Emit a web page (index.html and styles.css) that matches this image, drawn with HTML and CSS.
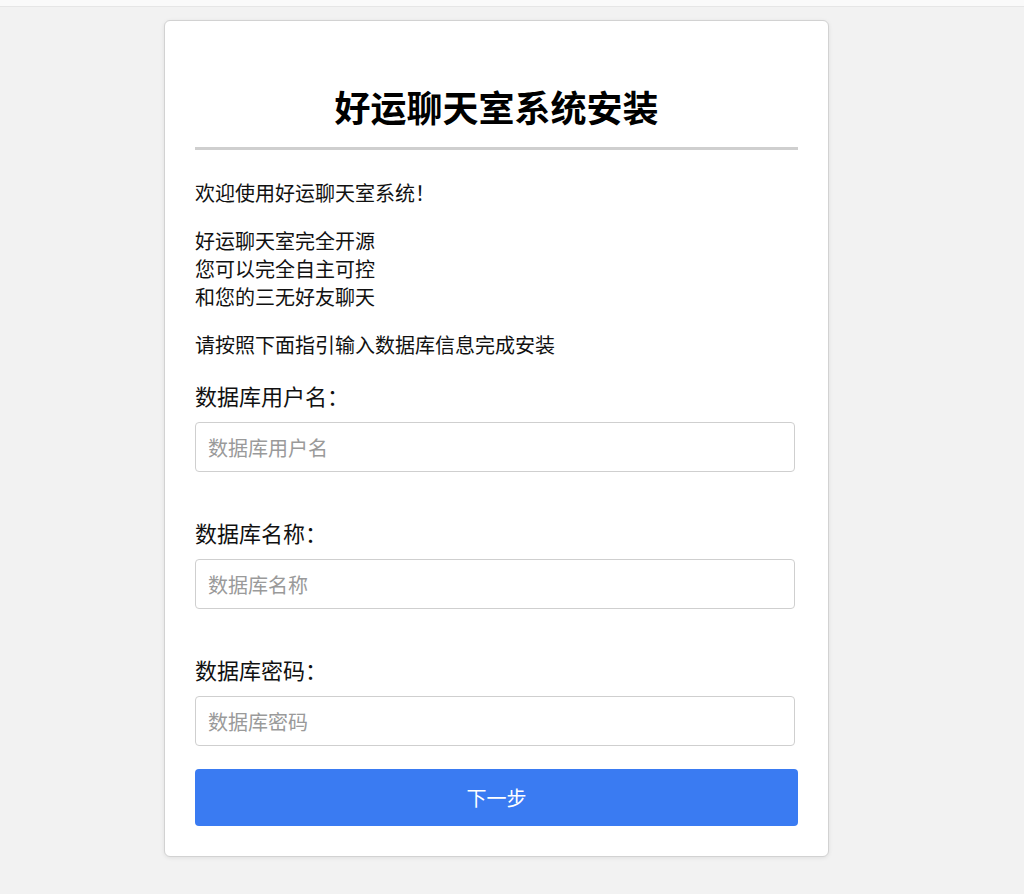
FILE: index.html
```html
<!DOCTYPE html>
<html lang="zh-CN">
<head>
    <meta charset="UTF-8">
    <meta name="viewport" content="width=device-width, initial-scale=1.0">
    <title>好运聊天室系统安装</title>
    <link rel="stylesheet" href="styles.css">
</head>
<body>
    <div class="topbar"></div>

    <div class="card">
        <h1>好运聊天室系统安装</h1>

        <div class="intro">
            <p>欢迎使用好运聊天室系统！</p>
            <p>好运聊天室完全开源<br>您可以完全自主可控<br>和您的三无好友聊天</p>
            <p>请按照下面指引输入数据库信息完成安装</p>
        </div>

        <form class="install-form" onsubmit="return false;">
            <div class="field">
                <label for="dbUser">数据库用户名：</label>
                <input type="text" id="dbUser" placeholder="数据库用户名">
            </div>
            <div class="field">
                <label for="dbName">数据库名称：</label>
                <input type="text" id="dbName" placeholder="数据库名称">
            </div>
            <div class="field">
                <label for="dbPass">数据库密码：</label>
                <input type="password" id="dbPass" placeholder="数据库密码">
            </div>
            <button type="submit" class="btn">下一步</button>
        </form>
    </div>
</body>
</html>
```

FILE: styles.css
```css
* {
    margin: 0;
    padding: 0;
    box-sizing: border-box;
}

body {
    font-family: "Noto Sans CJK SC", "Noto Sans", sans-serif;
    background: #f2f2f2;
    color: #111;
    min-height: 100vh;
}

.topbar {
    height: 7px;
    background: #fafafa;
    border-bottom: 1px solid #e6e6e6;
}

.card {
    width: 665px;
    margin: 13px 0 37px 164px;
    padding: 30px;
    background: #fff;
    border: 1px solid #d2d2d2;
    border-radius: 6px;
    box-shadow: 0 1px 4px rgba(0, 0, 0, 0.08);
}

.card h1 {
    margin-top: 29px;
    padding-bottom: 15px;
    border-bottom: 3px solid #cfcfcf;
    font-size: 36px;
    line-height: 52px;
    font-weight: 700;
    text-align: center;
    color: #000;
}

.intro {
    margin-top: 29px;
}

.intro p {
    font-size: 20px;
    line-height: 28px;
    margin-bottom: 20px;
}

.intro p:last-child {
    margin-bottom: 0;
}

.install-form {
    margin-top: 21px;
}

.field {
    margin-bottom: 45px;
}

.field:last-of-type {
    margin-bottom: 23px;
}

.field label {
    display: block;
    font-size: 22px;
    line-height: 30px;
    margin-bottom: 12px;
}

.field input {
    display: block;
    width: 600px;
    height: 50px;
    padding: 0 12px;
    border: 1px solid #cfcfcf;
    border-radius: 4px;
    font-family: inherit;
    font-size: 20px;
    color: #111;
    outline: none;
}

.field input::placeholder {
    color: #9a9a9a;
}

.btn {
    display: block;
    width: 100%;
    height: 57px;
    background: #3a7bf2;
    color: #fff;
    border: none;
    border-radius: 4px;
    font-family: inherit;
    font-size: 20px;
    cursor: pointer;
}
```
